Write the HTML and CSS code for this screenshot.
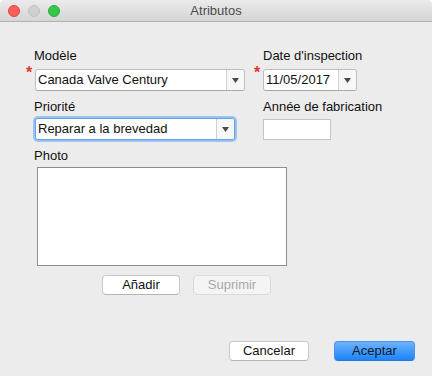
FILE: index.html
```html
<!DOCTYPE html>
<html lang="fr">
<head>
    <meta charset="UTF-8">
    <title>Atributos</title>
    <link rel="stylesheet" href="styles.css">
</head>
<body>

<div class="window">
    <!-- Title bar -->
    <div class="titlebar">
        <div class="lights">
            <span class="light close"></span>
            <span class="light minimize"></span>
            <span class="light zoom"></span>
        </div>
        <div class="title">Atributos</div>
        <div></div>
    </div>

    <!-- Form -->
    <div class="content">
        <div class="row">
            <div class="field field-model">
                <div class="label">Modèle</div>
                <div class="control-line">
                    <span class="req">*</span>
                    <div class="select select-model">
                        <span class="select-text">Canada Valve Century</span>
                        <span class="select-arrow">
                            <svg width="7" height="5" viewBox="0 0 7 5"><path d="M0 0 L7 0 L3.5 5 Z" fill="#4a4a4a"/></svg>
                        </span>
                    </div>
                </div>
            </div>
            <div class="field field-date">
                <div class="label">Date d'inspection</div>
                <div class="control-line">
                    <span class="req">*</span>
                    <div class="select select-date">
                        <span class="select-text">11/05/2017</span>
                        <span class="select-arrow">
                            <svg width="7" height="5" viewBox="0 0 7 5"><path d="M0 0 L7 0 L3.5 5 Z" fill="#4a4a4a"/></svg>
                        </span>
                    </div>
                </div>
            </div>
        </div>

        <div class="row row-second">
            <div class="field field-model">
                <div class="label label-second">Priorité</div>
                <div class="control-line">
                    <span class="req req-empty"></span>
                    <div class="select select-priority focused">
                        <span class="select-text">Reparar a la brevedad</span>
                        <span class="select-arrow">
                            <svg width="7" height="5" viewBox="0 0 7 5"><path d="M0 0 L7 0 L3.5 5 Z" fill="#4a4a4a"/></svg>
                        </span>
                    </div>
                </div>
            </div>
            <div class="field field-date">
                <div class="label label-second">Année de fabrication</div>
                <div class="control-line">
                    <span class="req req-empty"></span>
                    <div class="text-input"></div>
                </div>
            </div>
        </div>

        <div class="photo-field">
            <div class="label">Photo</div>
            <div class="photo-box"></div>
        </div>

        <div class="photo-actions">
            <button class="button">Añadir</button>
            <button class="button" disabled>Suprimir</button>
        </div>
    </div>

    <!-- Footer -->
    <div class="footer">
        <button class="button button-cancel">Cancelar</button>
        <button class="button button-default">Aceptar</button>
    </div>
</div>

</body>
</html>
```

FILE: styles.css
```css
html, body {
    margin: 0;
    padding: 0;
    background: #ffffff;
}

body {
    font-family: "Liberation Sans", Arial, sans-serif;
    font-size: 13px;
    color: #111;
}

/* Window */
.window {
    width: 432px;
    height: 376px;
    background: #ececec;
    border-radius: 5px 5px 0 0;
    overflow: hidden;
    display: flex;
    flex-direction: column;
}

.titlebar {
    height: 21px;
    background: linear-gradient(#ebebeb, #d5d5d5);
    border-bottom: 1px solid #b2b2b2;
    display: grid;
    grid-template-columns: 1fr auto 1fr;
    align-items: center;
}

.lights {
    display: flex;
    gap: 8px;
    padding-left: 8px;
}

.light {
    width: 12px;
    height: 12px;
    border-radius: 50%;
    box-sizing: border-box;
}

.close {
    background: #fc5f57;
    border: 1px solid #e24640;
}

.minimize {
    background: #d0d0d0;
    border: 1px solid #c2c2c2;
}

.zoom {
    background: #34c84a;
    border: 1px solid #2aac3c;
}

.title {
    color: #4c4c4c;
    font-size: 13px;
    line-height: 16px;
}

/* Form */
.content {
    padding: 26px 0 0 26px;
}

.row {
    display: flex;
    gap: 9px;
}

.row-second {
    margin-top: 8px;
}

.field-model {
    width: 219px;
}

.label {
    line-height: 16px;
    padding-left: 8px;
    margin-bottom: 5px;
    white-space: nowrap;
}

.field-date .label {
    padding-left: 9px;
}

.label-second {
    margin-bottom: 3px;
}

.control-line {
    display: flex;
    align-items: flex-start;
}

.req {
    width: 9px;
    flex: none;
    color: #e2382b;
    font-weight: bold;
    font-size: 16px;
    line-height: 10px;
    margin-top: -1px;
}

.select {
    height: 22px;
    box-sizing: border-box;
    background: #fff;
    border: 1px solid #bdbdbd;
    border-bottom-color: #a9a9a9;
    border-radius: 3px;
    display: flex;
    align-items: center;
}

.select-model {
    width: 210px;
}

.select-date {
    width: 94px;
}

.select-priority {
    width: 200px;
}

.select.focused {
    border-color: #6c9ee6;
    box-shadow: 0 0 0 2px #9cc1f3;
}

.select-text {
    flex: 1;
    padding-left: 2px;
    line-height: 20px;
    white-space: nowrap;
    overflow: hidden;
}

.select-arrow {
    width: 17px;
    height: 20px;
    border-left: 1px solid #cfcfcf;
    background: #f7f7f7;
    border-radius: 0 2px 2px 0;
    display: flex;
    align-items: center;
    justify-content: center;
}

.text-input {
    width: 68px;
    height: 21px;
    margin-top: 1px;
    box-sizing: border-box;
    background: #fff;
    border: 1px solid #c4c4c4;
}

.photo-field {
    margin-top: 8px;
}

.photo-field .label {
    margin-bottom: 3px;
}

.photo-box {
    margin-left: 11px;
    width: 250px;
    height: 99px;
    box-sizing: border-box;
    background: #fff;
    border: 1px solid #8e8e8e;
}

.photo-actions {
    display: flex;
    gap: 13px;
    margin: 9px 0 0 76px;
}

/* Buttons */
.button {
    height: 20px;
    width: 78px;
    box-sizing: border-box;
    font-family: inherit;
    font-size: 13px;
    color: #111;
    background: #fff;
    border: 1px solid #c8c8c8;
    border-bottom-color: #b4b4b4;
    border-radius: 4px;
    padding: 0;
    line-height: 18px;
}

.button:disabled {
    background: #f4f4f4;
    border-color: #dadada;
    color: #a9a9a9;
}

.footer {
    margin-top: auto;
    display: flex;
    justify-content: flex-end;
    gap: 25px;
    padding: 0 17px 15px 0;
}

.button-cancel {
    width: 80px;
}

.button-default {
    width: 81px;
    background: linear-gradient(#6db3fb, #1d84fb);
    border: 1px solid #4a91f2;
    border-bottom-color: #2b74e0;
    color: #0f1a2c;
}
```
